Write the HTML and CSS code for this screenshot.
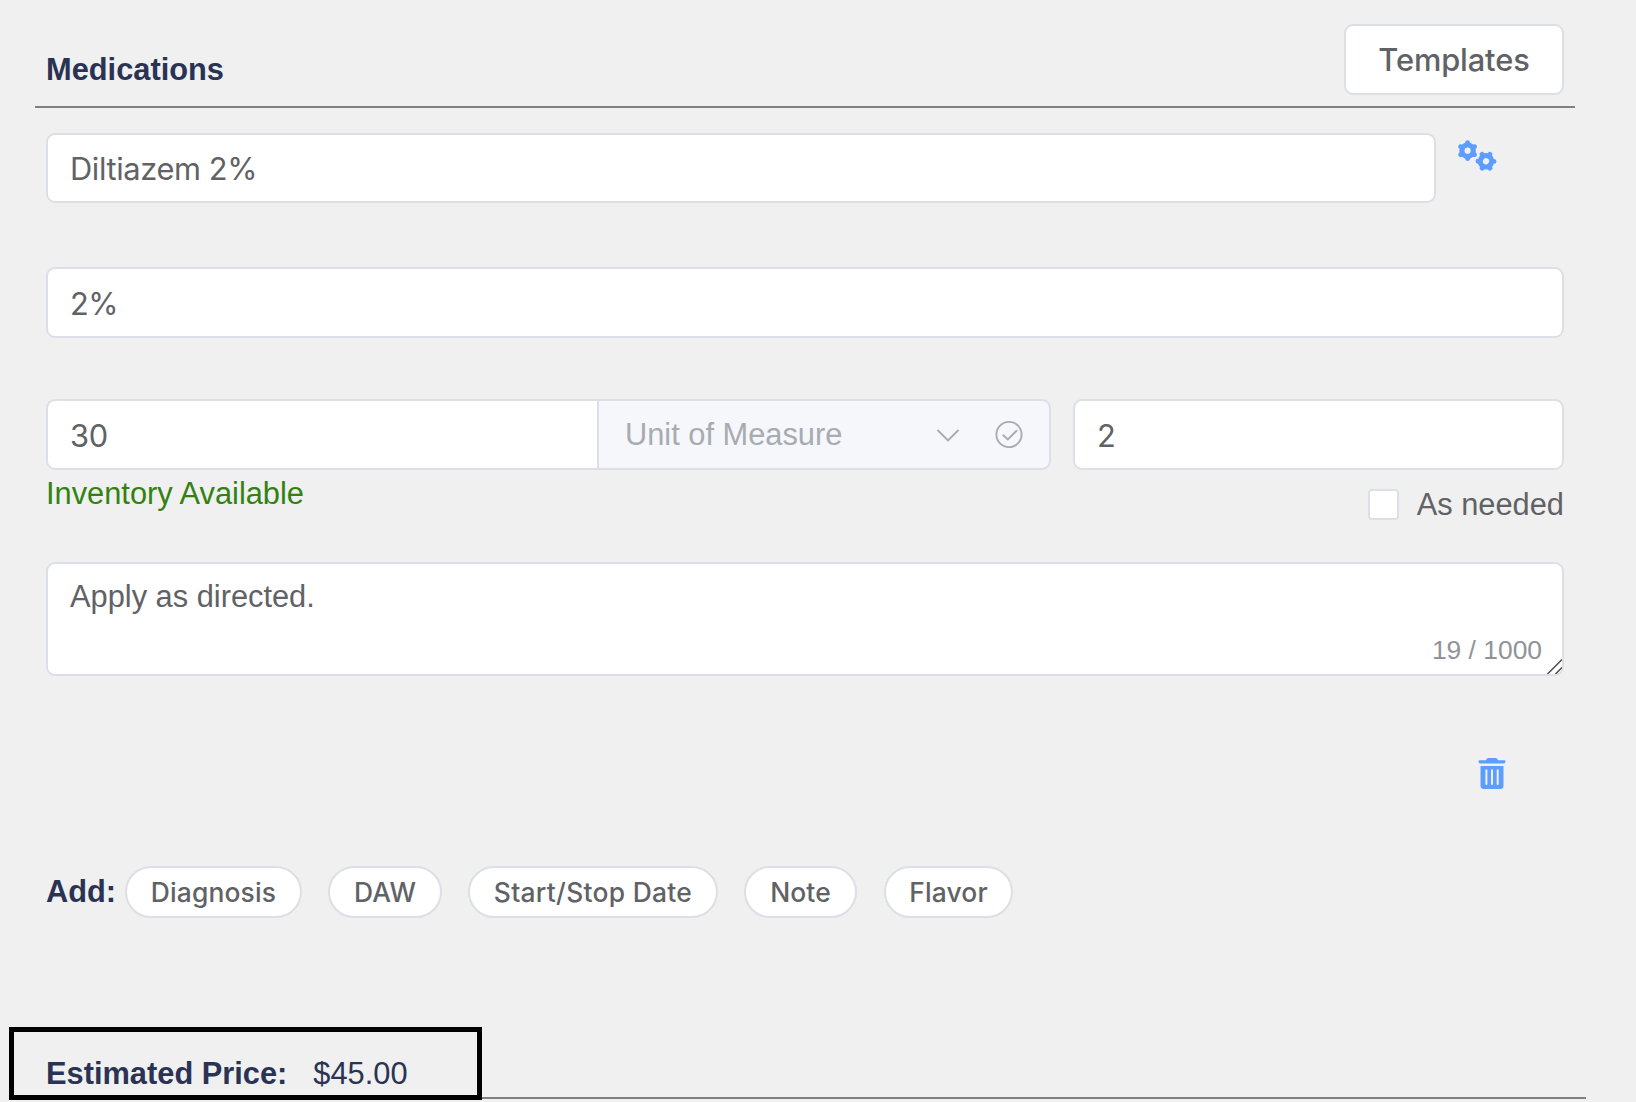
FILE: index.html
```html
<!DOCTYPE html>
<html lang="en">
<head>
<meta charset="utf-8">
<title>Medications</title>
<link rel="stylesheet" href="styles.css">
</head>
<body>
<main class="page">
  <header class="head">
    <h1 class="title">Medications</h1>
    <button class="btn" type="button"><span>Templates</span></button>
  </header>
  <section class="form">
    <div class="row drug-row">
      <div class="field drug"><span class="t-drug">Diltiazem 2%</span></div>
      <svg class="gears" width="40" height="34" viewBox="0 0 40 34">
        <g transform="translate(10.6 11.7)">
          <circle r="5.700" fill="none" stroke="#5c9dff" stroke-width="5.200"/>
          <path d="M0-7V-8M6.1-3.5L7-4M6.1 3.5L7 4M0 7V8M-6.1 3.5L-7 4M-6.1-3.5L-7-4" stroke="#5c9dff" stroke-width="4.800" stroke-linecap="round"/>
        </g>
        <g transform="translate(29 22.3) rotate(30)">
          <circle r="5.700" fill="none" stroke="#5c9dff" stroke-width="5.200"/>
          <path d="M0-7V-8M6.1-3.5L7-4M6.1 3.5L7 4M0 7V8M-6.1 3.5L-7 4M-6.1-3.5L-7-4" stroke="#5c9dff" stroke-width="4.800" stroke-linecap="round"/>
        </g>
      </svg>
    </div>
    <div class="field strength"><span class="t-strength">2%</span></div>
    <div class="row qty-row">
      <div class="group">
        <div class="field qty"><span class="t-num">30</span></div>
        <div class="field unit">
          <span class="t-unit">Unit of Measure</span>
          <svg class="unit-icons" width="92" height="32" viewBox="0 0 92 32">
            <path d="M5.500 11L16 21.500L26.500 11" fill="none" stroke="#a8abb2" stroke-width="1.900"/>
            <circle cx="77" cy="15.500" r="12.600" fill="none" stroke="#a8abb2" stroke-width="1.900"/>
            <path d="M70.800 15.800L75.800 20.500L85.100 11.300" fill="none" stroke="#a8abb2" stroke-width="1.900"/>
          </svg>
        </div>
      </div>
      <div class="field refills"><span class="t-num">2</span></div>
    </div>
    <div class="row status-row">
      <span class="inventory">Inventory Available</span>
      <label class="needed"><span class="box"></span><span class="t-needed">As needed</span></label>
    </div>
    <div class="area">
      <span class="t-area">Apply as directed.</span>
      <span class="count">19 / 1000</span>
      <svg class="grip" width="16" height="16" viewBox="0 0 16 16"><path d="M1.500 16L16 1.500M9.500 16L16 9.500" stroke="#4a4a4a" stroke-width="1.500"/></svg>
    </div>
    <div class="remove">
      <svg width="28" height="32" viewBox="0 0 28 32">
        <path fill="#5c9dff" d="M1.500 2.300H8Q8.500 0 10.500 0H17.500Q19.500 0 20 2.300H26.500Q27.500 2.300 27.500 3.500Q27.500 5.600 25.500 5.600H2.500Q.5 5.600 .5 3.500Q.5 2.300 1.500 2.300ZM2.500 8H25.500V27.500Q25.500 31 22 31H6Q2.500 31 2.500 27.500Z"/>
        <path d="M8.400 12.300V26M14 12.300V26M19.700 12.300V26" stroke="#f0f0f0" stroke-width="2" stroke-linecap="round"/>
      </svg>
    </div>
    <div class="row add-row">
      <strong class="add">Add:</strong>
      <button class="chip c1" type="button"><span>Diagnosis</span></button>
      <button class="chip c2" type="button"><span>DAW</span></button>
      <button class="chip c3" type="button"><span>Start/Stop Date</span></button>
      <button class="chip c4" type="button"><span>Note</span></button>
      <button class="chip c5" type="button"><span>Flavor</span></button>
    </div>
  </section>
  <footer class="foot">
    <div class="price"><strong class="price-label">Estimated Price:</strong><span class="amount">$45.00</span></div>
    <div class="rule"></div>
  </footer>
</main>
</body>
</html>
```
FILE: styles.css
```css
* { box-sizing: border-box; }
html, body { margin: 0; height: 1102px; overflow: hidden; }
body {
  background: #f0f0f0;
  color: #606266;
  font-family: "Liberation Sans", Arial, sans-serif;
  font-size: 30.8px;
  line-height: 36px;
  white-space: nowrap;
}
button { font: inherit; color: inherit; padding: 0; }
svg { display: block; flex: none; }

.page { display: flex; flex-direction: column; height: 1102px; }
.head {
  display: flex;
  justify-content: space-between;
  height: 108px;
  margin: 0 61px 0 35px;
  padding: 24px 11px 0;
  border-bottom: 2px solid #808080;
}
.title { margin: 28px 0 0; font-size: 30.8px; line-height: 36px; color: #2a3354; }
.btn {
  width: 220px;
  height: 71px;
  background: #fff;
  border: 2px solid #dcdfe6;
  border-radius: 9px;
  font-family: Inter, sans-serif;
  font-weight: 450;
  font-size: 30.8px;
  letter-spacing: -0.1px;
}

.form { padding: 25px 72px 0 46px; }
.row { display: flex; }
.field {
  display: flex;
  align-items: center;
  height: 71px;
  padding: 2px 22px 0;
  background: #fff;
  border: 2px solid #dcdfe6;
  border-radius: 9px;
  font-family: Inter, sans-serif;
}
.drug-row { height: 70px; }
.drug { width: 1390px; height: 70px; letter-spacing: -0.37px; }
.gears { margin: 6px 0 0 21px; }
.strength { margin-top: 64px; letter-spacing: -0.5px; }
.qty-row { margin-top: 61px; gap: 22px; }
.group { display: flex; width: 1005px; }
.qty { width: 551px; border-right: 0; border-radius: 9px 0 0 9px; letter-spacing: -0.3px; }
.unit {
  flex: 1;
  justify-content: space-between;
  padding: 0 25px 0 26px;
  background: #f5f7fa;
  color: #a8abb2;
  border-radius: 0 9px 9px 0;
  font-family: "Liberation Sans", Arial, sans-serif;
}
.refills { flex: 1; }

.status-row { justify-content: space-between; height: 92px; }
.inventory { margin-top: 6px; color: #338211; }
.needed { display: flex; align-items: center; gap: 18px; height: 36px; margin-top: 17px; }
.box { width: 31px; height: 31px; margin-bottom: 1px; background: #fff; border: 2px solid #dcdfe6; border-radius: 4px; }

.area {
  position: relative;
  height: 114px;
  padding: 15px 22px;
  background: #fff;
  border: 2px solid #dcdfe6;
  border-radius: 9px;
}
.count { position: absolute; right: 20px; bottom: 8px; font-size: 26.4px; line-height: 32px; color: #909399; }
.grip { position: absolute; right: 0; bottom: 0; }
.remove { display: flex; justify-content: flex-end; margin-top: 82px; padding-right: 58px; }

.add-row { height: 52px; margin-top: 76px; align-items: center; }
.add { width: 79px; color: #2a3354; }
.chip {
  height: 52px;
  margin-right: 26px;
  background: #fff;
  border: 2px solid #dcdfe6;
  border-radius: 26px;
  font-family: Inter, sans-serif;
  font-weight: 450;
  font-size: 26.4px;
  line-height: 32px;
  letter-spacing: 0.15px;
}
.c1 { width: 177px; }
.c2 { width: 114px; }
.c3 { width: 250px; letter-spacing: 0.3px; }
.c4 { width: 113px; margin-right: 27px; }
.c5 { width: 129px; }

.foot { display: flex; align-items: flex-end; height: 73px; margin: auto 50px 2px 9px; }
.price {
  display: flex;
  gap: 26px;
  width: 473px;
  height: 73px;
  padding: 24px 0 0 32px;
  border: 5px solid #000;
  color: #2a3354;
}
.rule { flex: 1; height: 2px; margin-bottom: 1px; background: #808080; }
```
